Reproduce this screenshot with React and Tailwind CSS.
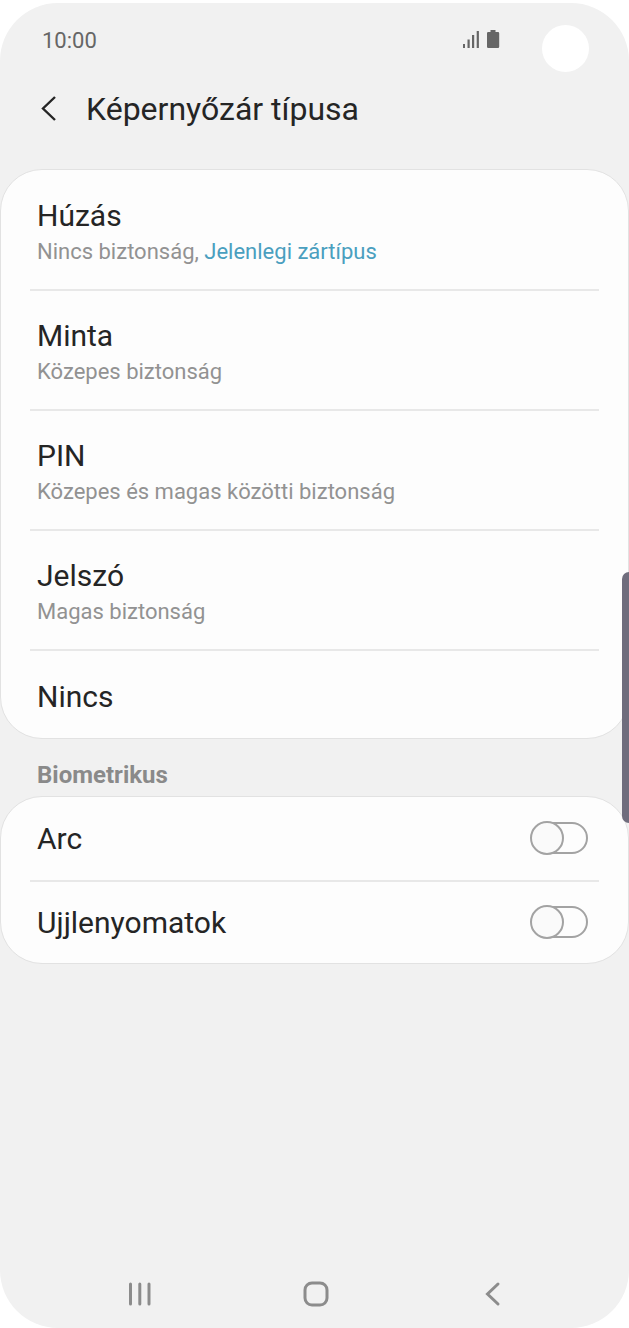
import React, { useState } from 'react';

const LOCK_TYPES = [
    { title: 'Húzás', detail: 'Nincs biztonság,', current: 'Jelenlegi zártípus' },
    { title: 'Minta', detail: 'Közepes biztonság' },
    { title: 'PIN', detail: 'Közepes és magas közötti biztonság' },
    { title: 'Jelszó', detail: 'Magas biztonság' },
    { title: 'Nincs' },
];

const BIOMETRICS = [
    { id: 'face', title: 'Arc' },
    { id: 'fingerprints', title: 'Ujjlenyomatok' },
];

const StatusBar = () => (
    <div className="flex h-[74px] items-center pl-[42px] pr-10 text-[#666666]">
        <span className="pt-0.5 text-[22px] leading-8">10:00</span>
        <svg className="mb-0.5 ml-auto mr-[42px] h-5 w-[38px]" viewBox="0 0 38 20" fill="currentColor" aria-hidden="true">
            <rect x="1" y="15" width="2" height="4" />
            <rect x="5.5" y="10.5" width="2.2" height="8.5" />
            <rect x="10" y="6" width="2.2" height="13" />
            <rect x="14.7" y="2" width="2.2" height="17" />
            <path d="M28.5 1h5v2H36a1.2 1.2 0 0 1 1.2 1.2v13.6A1.2 1.2 0 0 1 36 19H26.2a1.2 1.2 0 0 1-1.2-1.2V4.2A1.2 1.2 0 0 1 26.2 3h2.3z" />
        </svg>
        {/* camera cutout */}
        <div className="mt-4 size-[47px] rounded-full bg-white" />
    </div>
);

const Header = () => (
    <header className="flex h-[92px] items-center gap-6 pb-7 pl-9">
        <button type="button" aria-label="Vissza" className="text-[#252525]">
            <svg className="h-[26px] w-[26px]" viewBox="0 0 26 26" fill="none" stroke="currentColor" strokeWidth="2.4">
                <path d="M19 1L7 12.5L19 24" />
            </svg>
        </button>
        <h1 className="text-[32px] leading-10">Képernyőzár típusa</h1>
    </header>
);

const Card = ({ children }) => (
    <ul className="rounded-[42px] border border-[#e2e2e2] bg-[#fdfdfd] px-[29px] pt-px">{children}</ul>
);

const LockRow = ({ title, detail, current }) => (
    <li className="border-b-2 border-[#e8e8e8] last:border-b-0">
        <button type="button" className={`block w-full px-[7px] pt-1 text-left ${detail ? 'h-[118px]' : 'h-[87px]'}`}>
            <span className="block text-[30px] leading-10">{title}</span>
            {detail && (
                <span className="block text-[22px] leading-8 text-[#929292]">
                    {detail}
                    {current && <span className="text-[#4a9fbf]"> {current}</span>}
                </span>
            )}
        </button>
    </li>
);

const ToggleRow = ({ id, title }) => {
    const [checked, setChecked] = useState(false);

    return (
        <li className="flex h-[84px] items-center justify-between border-b-2 border-[#e8e8e8] pl-[7px] pr-[11px] last:h-[81px] last:border-b-0">
            <label htmlFor={id} className="text-[30px] leading-10">{title}</label>
            <input
                id={id}
                type="checkbox"
                role="switch"
                checked={checked}
                onChange={(e) => setChecked(e.target.checked)}
                className="relative mb-0.5 h-8 w-[57px] appearance-none rounded-full border-2 border-[#a3a3a3] before:absolute before:-left-[3px] before:-top-[3px] before:size-[34px] before:rounded-full before:border-2 before:border-[#a3a3a3] before:bg-[#fafafa] checked:before:left-[21px]"
            />
        </li>
    );
};

const NavBar = () => (
    <nav className="mt-auto flex h-[68px] justify-around pl-[52px] pr-[49px] text-[#8c8c8c]">
        <button type="button" aria-label="Legutóbbiak" className="flex h-full w-24 items-center justify-center">
            <svg className="size-7" viewBox="0 0 28 28" fill="none" stroke="currentColor" strokeWidth="3" strokeLinecap="round">
                <path d="M4.5 4V24M13.8 4V24M23 4V24" />
            </svg>
        </button>
        <button type="button" aria-label="Kezdőlap" className="flex h-full w-24 items-center justify-center">
            <svg className="size-7" viewBox="0 0 28 28" fill="none" stroke="currentColor" strokeWidth="3">
                <rect x="3" y="3" width="22" height="22" rx="7" />
            </svg>
        </button>
        <button type="button" aria-label="Vissza" className="flex h-full w-24 items-center justify-center">
            <svg className="size-7" viewBox="0 0 28 28" fill="none" stroke="currentColor" strokeWidth="3" strokeLinecap="round">
                <path d="M20 4L9.500 14L20 24" />
            </svg>
        </button>
    </nav>
);

const App = () => {
    return (
        <div className="flex min-h-screen flex-col bg-white pt-[3px] font-['Roboto',sans-serif] text-[#252525]">
            <div className="relative flex grow flex-col overflow-hidden rounded-[58px] bg-[#f1f1f1]">
                <StatusBar />
                <Header />
                <main>
                    <Card>
                        {LOCK_TYPES.map((type) => (
                            <LockRow key={type.title} {...type} />
                        ))}
                    </Card>
                    <h2 className="px-[37px] pb-[5px] pt-5 text-[24px] font-bold leading-8 text-[#8a8a8a]">Biometrikus</h2>
                    <Card>
                        {BIOMETRICS.map((item) => (
                            <ToggleRow key={item.id} {...item} />
                        ))}
                    </Card>
                </main>
                <NavBar />
                {/* edge panel handle */}
                <div className="absolute right-0 top-[569px] h-[251px] w-[7px] rounded-l-full bg-[#6f6d7d]" />
            </div>
        </div>
    );
};

export default App;
